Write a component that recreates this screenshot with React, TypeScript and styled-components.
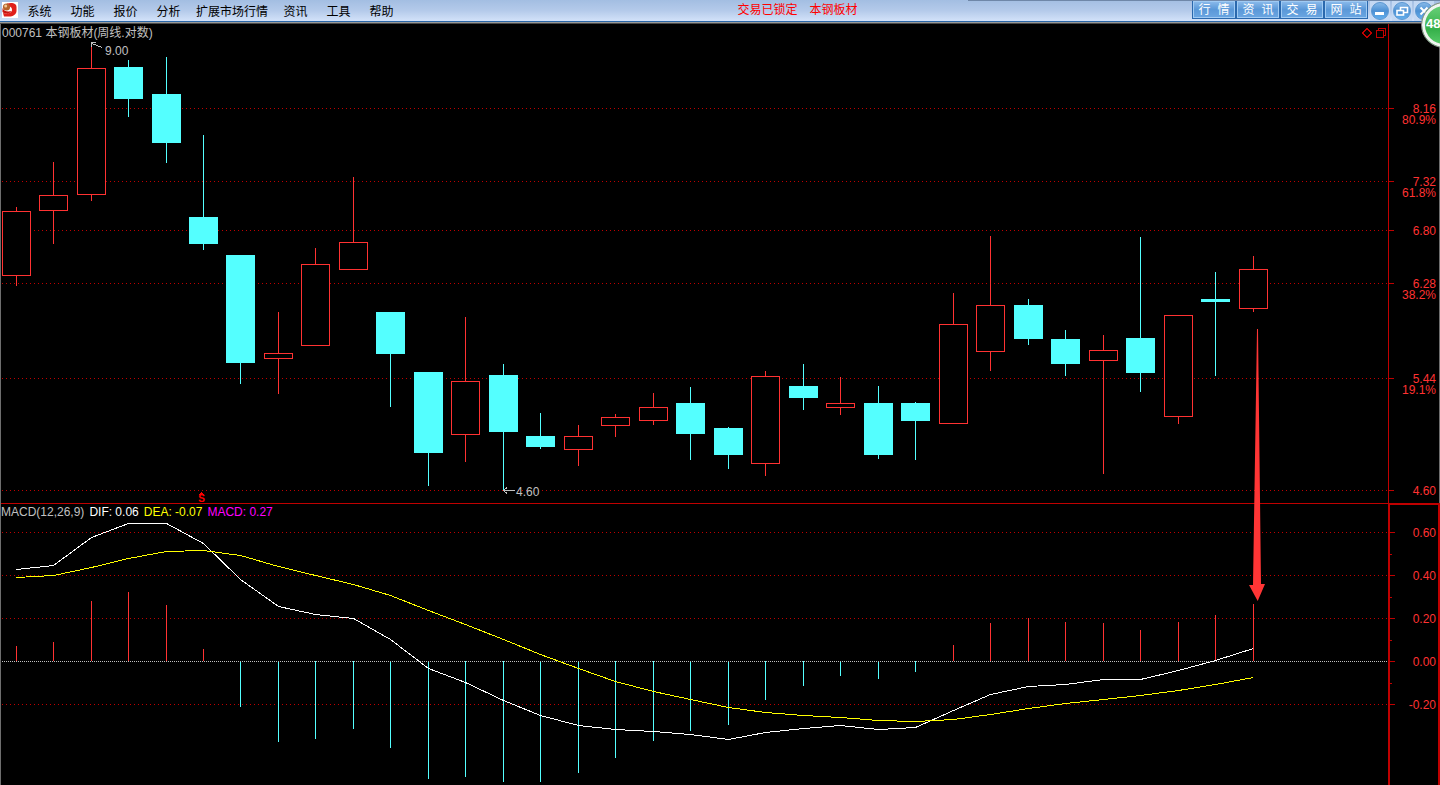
import React from "react";
import styled, { createGlobalStyle } from "styled-components";

const FONT = '"Liberation Sans", "Noto Sans CJK SC", sans-serif';
const RED = "#ff3232";
const AXIS_RED = "#c00000";
const CYAN = "#54ffff";
const GREY = "#c0c0c0";

const GlobalStyle = createGlobalStyle`
  * { box-sizing: border-box; }
  body {
    margin: 0;
    background: #000;
    font-family: ${FONT};
    font-size: 12px;
  }
  button {
    margin: 0;
    padding: 0;
    border: 0;
    background: none;
    color: inherit;
    font: inherit;
    cursor: pointer;
  }
`;

const Page = styled.div`
  position: relative;
  display: flex;
  flex-direction: column;
  min-height: 100vh;
  overflow: hidden;
  background: #000;
`;

/* ---------- header ---------- */

const Header = styled.header`
  position: relative;
  display: flex;
  align-items: flex-start;
  height: 24px;
  background: linear-gradient(#a3bee2, #b4caea 50%, #d3e2f9);
  background-size: 100% 21px;
  background-repeat: no-repeat;
  background-color: #4a4a4a;
  border-bottom: 1px solid #4a4a4a;
  box-shadow: inset 0 -1px 0 #9a9a98, inset 0 -2px 0 #2b68aa;
`;

const EdgeShadow = styled.span`
  position: absolute;
  top: 0;
  right: 0;
  width: 472px;
  height: 1px;
  background: #6f87a8;
`;

const Logo = styled.svg`
  flex: none;
  width: 16px;
  height: 16px;
  margin: 2px 0 0 2px;
`;

const Menu = styled.nav`
  display: flex;
`;

const MenuItem = styled.button`
  min-width: 43px;
  height: 24px;
  padding: 0 6px;
  color: #000;
  line-height: 24px;
  white-space: nowrap;
`;

const Status = styled.div`
  display: flex;
  flex: 1;
  justify-content: center;
  gap: 12px;
  color: #f00;
  line-height: 20px;
  white-space: nowrap;
`;

const LinkBar = styled.div`
  display: flex;
`;

const LinkButton = styled.button`
  width: 44px;
  height: 19px;
  padding-top: 4px;
  border: 1px solid #2a68ad;
  background: linear-gradient(#8dbcec, #5a98d8 50%, #6ba6e2);
  box-shadow: inset 0 0 0 1px #9fcaf3;
  color: #fff;
  font-family: "Liberation Mono", "Noto Sans CJK SC", monospace;
  line-height: 13px;
  white-space: nowrap;
`;

const WindowButtons = styled.div`
  display: flex;
  gap: 2px;
  padding: 1px 6px 0 2px;
`;

const WindowButton = styled.button`
  width: 20px;
  height: 20px;
  background: #c4d8f3;

  svg {
    display: block;
  }
`;

const Badge = styled.div`
  position: absolute;
  top: 2px;
  right: -27px;
  width: 46px;
  height: 46px;
  padding-left: 4px;
  border: 1px solid #8c8c8c;
  border-radius: 50%;
  background: linear-gradient(#6fd47e, #35b04a 60%, #5fd070);
  box-shadow: inset 0 0 0 3px #f1f4f1;
  color: #fff;
  font-size: 13px;
  font-weight: 700;
  line-height: 42px;
`;

/* ---------- charts ---------- */

const Charts = styled.main`
  position: relative;
  display: flex;
  flex: 1;
  flex-direction: column;
  border-left: 1px solid #6e6e6e;
`;

const Panel = styled.section<{ $grow?: boolean }>`
  display: flex;
  flex: ${(p) => (p.$grow ? "1 0 282px" : "0 0 479px")};
`;

const Plot = styled.div<{ $ruled?: boolean }>`
  position: relative;
  flex: 1;
  min-width: 0;
  border-top: ${(p) => (p.$ruled ? `1px solid ${AXIS_RED}` : "0")};
`;

const Axis = styled.div<{ $active?: boolean }>`
  flex: none;
  width: 52px;
  border: 0 solid ${AXIS_RED};
  border-width: ${(p) => (p.$active ? "2px 2px 0 2px" : "0 1px 0 1px")};
  border-right-color: ${(p) => (p.$active ? AXIS_RED : "#6e6e6e")};
`;

const Drawing = styled.svg`
  display: block;
  width: 100%;
  height: 100%;
  overflow: visible;
  font-family: ${FONT};
  font-size: 12px;
`;

const Caption = styled.div<{ $top?: number }>`
  position: absolute;
  top: ${(p) => p.$top ?? 0}px;
  left: 0;
  right: 0;
  display: flex;
  gap: 5px;
  height: 16px;
  color: ${GREY};
  line-height: 16px;
  white-space: nowrap;
`;

const Title = styled.h1`
  flex: 1;
  margin: 0;
  padding-left: 1px;
  font-size: 12px;
  font-weight: 400;
`;

const Reading = styled.span<{ $color?: string }>`
  color: ${(p) => p.$color ?? GREY};
`;

const PanelTools = styled.div`
  display: flex;
  align-items: center;
  gap: 2px;
  padding-right: 1px;
`;

const PanelTool = styled.button`
  width: 12px;
  height: 12px;

  svg {
    display: block;
  }
`;

const Pointer = styled.svg`
  position: absolute;
  inset: 0;
  width: 100%;
  height: 100%;
  pointer-events: none;
`;

/* ---------- data ---------- */

type Candle = [x: number, high: number, top: number, bottom: number, low: number, up: 0 | 1];

const CANDLES: Candle[] = [
  [16, 207, 211, 276, 286, 1],
  [53, 162, 195, 211, 244, 1],
  [91, 43, 68, 195, 201, 1],
  [128, 60, 67, 99, 117, 0],
  [166, 57, 94, 143, 163, 0],
  [203, 135, 217, 244, 250, 0],
  [240, 255, 255, 363, 384, 0],
  [278, 312, 353, 359, 394, 1],
  [315, 248, 264, 346, 346, 1],
  [353, 177, 242, 270, 270, 1],
  [390, 312, 312, 354, 407, 0],
  [428, 372, 372, 453, 486, 0],
  [465, 317, 381, 435, 462, 1],
  [503, 364, 375, 432, 490, 0],
  [540, 413, 436, 447, 449, 0],
  [578, 425, 436, 450, 466, 1],
  [615, 414, 417, 426, 437, 1],
  [653, 393, 407, 421, 425, 1],
  [690, 387, 403, 434, 460, 0],
  [728, 427, 428, 455, 469, 0],
  [765, 371, 376, 464, 476, 1],
  [803, 364, 386, 398, 410, 0],
  [840, 377, 403, 408, 415, 1],
  [878, 386, 403, 455, 459, 0],
  [915, 402, 403, 421, 460, 0],
  [953, 293, 324, 424, 424, 1],
  [990, 236, 305, 352, 371, 1],
  [1028, 299, 305, 339, 345, 0],
  [1065, 330, 339, 364, 376, 0],
  [1103, 335, 350, 361, 474, 1],
  [1140, 237, 338, 373, 392, 0],
  [1178, 315, 315, 417, 424, 1],
  [1215, 272, 299, 302, 376, 0],
  [1253, 256, 269, 309, 312, 1],
];

const ZERO = 661;

const BARS = [
  646, 642, 601, 592, 605, 649, 707, 742, 739, 729, 748, 779, 777, 782, 782, 773, 758,
  741, 731, 725, 700, 686, 676, 679, 672, 645, 623, 618, 622, 623, 630, 622, 615, 604,
];

const DIF = [
  569, 565, 537, 523, 523, 543, 579, 606, 614, 618, 639, 668, 682, 700, 715, 725, 729,
  731, 734, 739, 732, 728, 725, 729, 727, 710, 694, 686, 684, 679, 679, 670, 660, 648,
];

const DEA = [
  577, 575, 567, 558, 551, 550, 555, 566, 575, 584, 595, 610, 624, 639, 654, 668, 681,
  691, 699, 707, 712, 715, 717, 720, 721, 719, 714, 708, 703, 699, 695, 690, 684, 677,
];

const PRICE_MARKS = [
  { y: 108, label: "8.16", percent: "80.9%" },
  { y: 181, label: "7.32", percent: "61.8%" },
  { y: 230, label: "6.80" },
  { y: 283, label: "6.28", percent: "38.2%" },
  { y: 378, label: "5.44", percent: "19.1%" },
  { y: 490, label: "4.60" },
];

const MACD_MARKS = [
  { y: 532, label: "0.60" },
  { y: 575, label: "0.40" },
  { y: 618, label: "0.20" },
  { y: 661, label: "0.00" },
  { y: 704, label: "-0.20" },
];

const MINOR_TICKS = [554, 597, 640, 683];

const MENU = ["系统", "功能", "报价", "分析", "扩展市场行情", "资讯", "工具", "帮助"];
const LINKS = ["行 情", "资 讯", "交 易", "网 站"];

const toPoints = (values: number[]) =>
  values.map((y, i) => `${CANDLES[i][0] + 0.5},${y + 0.5}`).join(" ");

/* ---------- drawn parts ---------- */

function GridLine({ y, color = AXIS_RED, gap = 3 }: { y: number; color?: string; gap?: number }) {
  return (
    <line x1={2} x2="100%" y1={y + 0.5} y2={y + 0.5} stroke={color} strokeDasharray={`1 ${gap}`} />
  );
}

function CandleShape({ candle }: { candle: Candle }) {
  const [x, high, top, bottom, low, up] = candle;
  const color = up ? RED : CYAN;
  return (
    <g>
      <rect x={x} y={high} width={1} height={low - high} fill={color} />
      <rect x={x - 14} y={top} width={29} height={bottom - top} fill={color} />
      {up === 1 && <rect x={x - 13} y={top + 1} width={27} height={bottom - top - 2} fill="#000" />}
    </g>
  );
}

function AxisLabels({
  marks,
  right,
}: {
  marks: { y: number; label: string; percent?: string }[];
  right: number;
}) {
  return (
    <>
      {marks.map((m) => (
        <g key={m.label}>
          <rect x={0} y={m.y} width={5} height={1} fill={AXIS_RED} />
          <text x={right} y={m.y + 5} textAnchor="end" fill={RED}>
            {m.label}
          </text>
          {m.percent && (
            <text x={right} y={m.y + 16} textAnchor="end" fill={RED}>
              {m.percent}
            </text>
          )}
        </g>
      ))}
    </>
  );
}

function Orb({ children }: { children: React.ReactNode }) {
  return (
    <svg width="20" height="20" viewBox="0 0 20 20" aria-hidden="true">
      <defs>
        <linearGradient id="orb" x1="0" y1="0" x2="0" y2="1">
          <stop offset="0" stopColor="#8abbea" />
          <stop offset="0.5" stopColor="#4c90d4" />
          <stop offset="1" stopColor="#63b0ee" />
        </linearGradient>
      </defs>
      <circle cx="10" cy="10" r="8.5" fill="url(#orb)" stroke="#5c97d2" />
      {children}
    </svg>
  );
}

export default function App() {
  return (
    <Page>
      <GlobalStyle />
      <Header>
        <EdgeShadow />
        <Logo viewBox="0 0 16 16" aria-hidden="true">
          <rect width="16" height="16" fill="#fff" />
          <path d="M5 1.5L9 1C12 1 14.5 2 14.5 5V9C14.5 12.500 11 14.500 7 14.500H2L1 11C5 12 10 11 10 8C10 5 8 4 5 4Z" fill="#e0201c" />
          <path d="M0.500 6C2 9.500 6 10 9.500 9C7.500 12 3 12.500 0.500 10Z" fill="#c8140f" />
          <circle cx="4.500" cy="5" r="3.600" fill="#b8642c" />
          <circle cx="3.700" cy="4" r="1.500" fill="#f0c896" />
        </Logo>
        <Menu aria-label="主菜单">
          {MENU.map((item) => (
            <MenuItem key={item} type="button">
              {item}
            </MenuItem>
          ))}
        </Menu>
        <Status>
          <span>交易已锁定</span>
          <span>本钢板材</span>
        </Status>
        <LinkBar>
          {LINKS.map((item) => (
            <LinkButton key={item} type="button">
              {item}
            </LinkButton>
          ))}
        </LinkBar>
        <WindowButtons>
          <WindowButton type="button" aria-label="最小化">
            <Orb>
              <rect x="5" y="11" width="9" height="3" fill="#fff" />
            </Orb>
          </WindowButton>
          <WindowButton type="button" aria-label="还原">
            <Orb>
              <path d="M8.5 9V6.5h7v5H12" fill="none" stroke="#fff" strokeWidth="1.6" />
              <rect x="5" y="9.5" width="6.5" height="4.5" fill="#5496d8" stroke="#fff" strokeWidth="1.6" />
            </Orb>
          </WindowButton>
          <WindowButton type="button" aria-label="关闭">
            <Orb>
              <path d="M6.5 6.5l7 7M13.5 6.5l-7 7" stroke="#fff" strokeWidth="2" />
            </Orb>
          </WindowButton>
        </WindowButtons>
      </Header>

      <Charts>
        <Panel>
          <Plot>
            <Drawing shapeRendering="crispEdges" role="img" aria-label="周线">
              <g transform="translate(-1 -24)">
                {PRICE_MARKS.map((m) => (
                  <GridLine key={m.y} y={m.y} />
                ))}
                {CANDLES.map((c) => (
                  <CandleShape key={c[0]} candle={c} />
                ))}
                <path d="M102.5 47.5L91.5 43.5M95.5 42.5H91.5V46.5" fill="none" stroke={GREY} />
                <text x={105} y={55} fill={GREY}>
                  9.00
                </text>
                <path d="M515 490.5H503.5M507 487.5L503.5 490.5L507 493.5" fill="none" stroke={GREY} />
                <text x={516} y={496} fill={GREY}>
                  4.60
                </text>
                <path d="M199 495L201.5 491.5L204 495Z" fill="#f00" />
                <text x={201.5} y={502} textAnchor="middle" fill="#f00" fontSize={10} fontWeight={700}>
                  S
                </text>
              </g>
            </Drawing>
            <Caption $top={1}>
              <Title>000761 本钢板材(周线.对数)</Title>
              <PanelTools>
                <PanelTool type="button" aria-label="标记">
                  <svg width="12" height="12" viewBox="0 0 12 12" shapeRendering="crispEdges">
                    <path d="M6 1.5L10.5 6L6 10.5L1.5 6Z" fill="none" stroke={AXIS_RED} />
                  </svg>
                </PanelTool>
                <PanelTool type="button" aria-label="窗口">
                  <svg width="12" height="12" viewBox="0 0 12 12" shapeRendering="crispEdges">
                    <path d="M3.5 3V1.5H10.5V8.5H9M1.5 3.5H8.5V10.5H1.5Z" fill="none" stroke={AXIS_RED} />
                  </svg>
                </PanelTool>
              </PanelTools>
            </Caption>
          </Plot>
          <Axis>
            <Drawing>
              <g transform="translate(0 -24)">
                <AxisLabels marks={PRICE_MARKS} right={47} />
              </g>
            </Drawing>
          </Axis>
        </Panel>

        <Panel $grow>
          <Plot $ruled>
            <Drawing shapeRendering="crispEdges" role="img" aria-label="MACD">
              <g transform="translate(-1 -504)">
                {MACD_MARKS.filter((m) => m.y !== ZERO).map((m) => (
                  <GridLine key={m.y} y={m.y} />
                ))}
                {BARS.map((y, i) => (
                  <rect
                    key={CANDLES[i][0]}
                    x={CANDLES[i][0]}
                    y={Math.min(y, ZERO)}
                    width={1}
                    height={Math.abs(y - ZERO)}
                    fill={y < ZERO ? RED : CYAN}
                  />
                ))}
                <GridLine y={ZERO} color={GREY} gap={1} />
                <polyline points={toPoints(DIF)} fill="none" stroke="#fff" />
                <polyline points={toPoints(DEA)} fill="none" stroke="#ff0" />
              </g>
            </Drawing>
            <Caption>
              <Reading>MACD(12,26,9)</Reading>
              <Reading $color="#fff">DIF: 0.06</Reading>
              <Reading $color="#ff0">DEA: -0.07</Reading>
              <Reading $color="#f0f">MACD: 0.27</Reading>
            </Caption>
          </Plot>
          <Axis $active>
            <Drawing>
              <g transform="translate(0 -505)">
                {MINOR_TICKS.map((y) => (
                  <rect key={y} x={0} y={y} width={2} height={1} fill={AXIS_RED} />
                ))}
                <AxisLabels marks={MACD_MARKS} right={46} />
              </g>
            </Drawing>
          </Axis>
        </Panel>

        <Pointer aria-hidden="true">
          <path
            transform="translate(-1 -24)"
            d="M1257 329H1258L1261 584H1265L1257.7 601L1249 585H1253Z"
            fill="#ff3535"
          />
        </Pointer>
      </Charts>
      <Badge>48</Badge>
    </Page>
  );
}
